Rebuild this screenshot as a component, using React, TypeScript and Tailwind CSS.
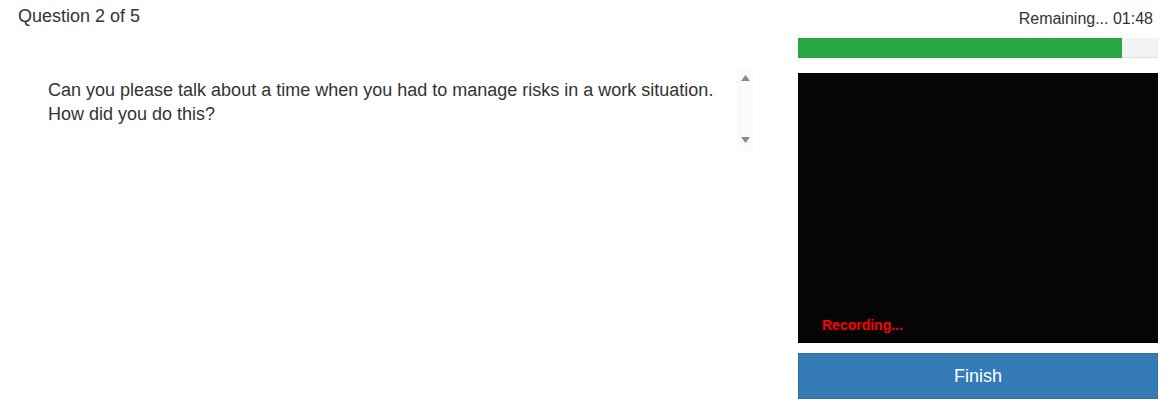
export default function App() {
  const progress = 90

  return (
    <div className="flex w-[1171px] h-[407px] bg-white text-[#333] font-['Liberation_Sans',Arial,sans-serif]">
      {/* Question side */}
      <div className="flex-1 pl-[18px] pt-[4px]">
        <h1 className="text-[18px] leading-[24px]">Question 2 of 5</h1>
        <div className="mt-[39px] ml-[30px] w-[705px] h-[84px] flex">
          <p className="flex-1 pt-[11px] text-[18px] leading-[24px]">
            Can you please talk about a time when you had to manage risks in a work situation.
            <br />
            How did you do this?
          </p>
          <div className="w-[16px] bg-[#fbfbfb] flex flex-col items-center justify-between py-[8px]">
            <svg width="9" height="6" viewBox="0 0 9 6"><polygon points="4.5,0 9,6 0,6" fill="#8a8a8a" /></svg>
            <svg width="9" height="6" viewBox="0 0 9 6"><polygon points="0,0 9,0 4.5,6" fill="#8a8a8a" /></svg>
          </div>
        </div>
      </div>

      {/* Recording side */}
      <div className="w-[360px] mr-[13px] flex flex-col">
        <div className="text-right text-[16px] leading-[20px] pt-[9px] pr-[5px]">Remaining... 01:48</div>
        <div className="mt-[9px] h-[20px] bg-[#f3f3f3] shadow-[inset_0_-1px_1px_rgba(0,0,0,0.08)]">
          <div className="h-full bg-[#28a745]" style={{ width: `${progress}%` }} />
        </div>
        <div className="mt-[15px] h-[270px] bg-[#050505] flex items-end px-[24px] pb-[10px]">
          <span className="text-[#ff0000] text-[14px] font-bold leading-[16px]">Recording...</span>
        </div>
        <button className="mt-[10px] h-[46px] bg-[#337ab7] border border-[#2e6da4] text-white text-[18px]">
          Finish
        </button>
      </div>
    </div>
  )
}
